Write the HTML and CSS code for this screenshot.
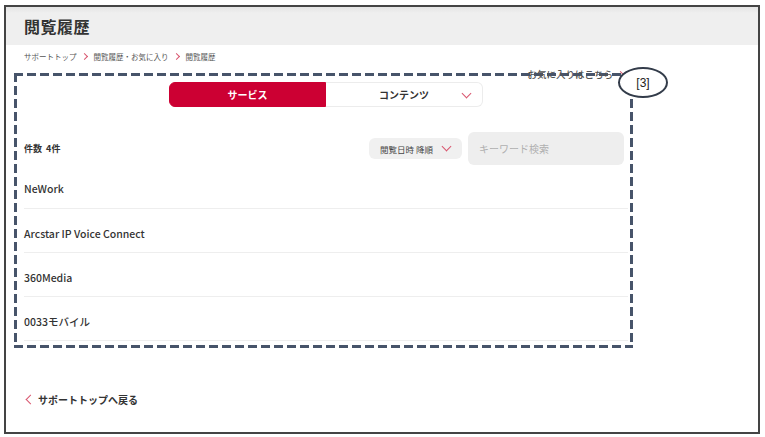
FILE: index.html
```html
<!DOCTYPE html>
<html lang="ja">
<head>
  <meta charset="UTF-8">
  <meta name="viewport" content="width=device-width, initial-scale=1.0">
  <title>閲覧履歴</title>
  <link rel="stylesheet" href="styles.css">
</head>
<body>
  <div class="frame">
    <header class="page-header">
      <h1>閲覧履歴</h1>
    </header>

    <nav class="breadcrumb">
      <a href="#">サポートトップ</a>
      <span class="sep"></span>
      <a href="#">閲覧履歴・お気に入り</a>
      <span class="sep"></span>
      <span>閲覧履歴</span>
    </nav>

    <section class="history">
      <a class="fav-link" href="#">お気に入りはこちら<span class="sep"></span></a>
      <span class="marker">[3]</span>

      <div class="tabs">
        <button class="tab active" type="button">サービス</button>
        <button class="tab" type="button">コンテンツ<span class="caret"></span></button>
      </div>

      <div class="toolbar">
        <div class="count">件数&nbsp; 4件</div>
        <div class="sort">閲覧日時 降順<span class="caret"></span></div>
        <input class="search" type="text" placeholder="キーワード検索">
      </div>

      <ul class="list">
        <li>NeWork</li>
        <li>Arcstar IP Voice Connect</li>
        <li>360Media</li>
        <li>0033モバイル</li>
      </ul>
    </section>

    <a class="back" href="#"><span class="back-arrow"></span>サポートトップへ戻る</a>
  </div>
</body>
</html>
```

FILE: styles.css
```css
body {
  margin: 0;
  padding: 5px 0 0 4px;
  font-family: "Noto Sans CJK JP", "Noto Sans", sans-serif;
  color: #333;
  background: #fff;
}

a {
  color: inherit;
  text-decoration: none;
}

.frame {
  box-sizing: border-box;
  width: 756px;
  height: 429px;
  border: 2px solid #444;
  background: #fff;
}

.page-header {
  height: 38px;
  background: linear-gradient(#e4e4e4, #efefef 6px);
  display: flex;
  align-items: center;
  padding-left: 18px;
}

.page-header h1 {
  margin: 0;
  font-size: 16px;
  font-weight: 700;
  color: #333;
  letter-spacing: 0.5px;
}

.breadcrumb {
  display: flex;
  align-items: center;
  gap: 4px;
  padding: 4px 0 0 18px;
  height: 14px;
  font-size: 7.5px;
  color: #555;
}

.sep {
  display: inline-block;
  width: 4px;
  height: 4px;
  border-top: 1px solid #d9566f;
  border-right: 1px solid #d9566f;
  transform: rotate(45deg);
  margin: 0 3px 0 1px;
}

/* dashed outline drawn with gradients so the dashes are long like the mockup */
.history {
  position: relative;
  box-sizing: border-box;
  width: 619px;
  height: 275px;
  margin: 10px 0 0 8px;
  padding: 9px 5px 0 10px;
  background:
    repeating-linear-gradient(90deg, #47546a 0 9px, transparent 9px 13px) top left / 100% 3px no-repeat,
    repeating-linear-gradient(90deg, #47546a 0 9px, transparent 9px 13px) bottom left / 100% 3px no-repeat,
    repeating-linear-gradient(180deg, #47546a 0 9px, transparent 9px 13px) top left / 3px 100% no-repeat,
    repeating-linear-gradient(180deg, #47546a 0 9px, transparent 9px 13px) top right / 3px 100% no-repeat;
}

.fav-link {
  position: absolute;
  top: -6px;
  right: 7px;
  font-size: 9.5px;
  font-weight: 500;
  color: #555;
  display: flex;
  align-items: center;
}

.fav-link .sep {
  margin-left: 5px;
}

.marker {
  position: absolute;
  top: -6px;
  right: -35px;
  box-sizing: border-box;
  width: 50px;
  height: 31px;
  border: 2px solid #333c4a;
  border-radius: 50%;
  background: #fff;
  display: flex;
  align-items: center;
  justify-content: center;
  font-family: "Liberation Sans", sans-serif;
  font-size: 12px;
  color: #222;
}

.tabs {
  display: flex;
  justify-content: center;
}

.tab {
  box-sizing: border-box;
  width: 157px;
  height: 25px;
  border: 1px solid #ececec;
  background: #fff;
  font-family: inherit;
  font-size: 10px;
  font-weight: 700;
  color: #333;
  position: relative;
  padding: 0;
}

.tab.active {
  background: #cc0033;
  border-color: #cc0033;
  color: #fff;
  border-radius: 6px 0 0 6px;
}

.tab:last-child {
  border-left: none;
  border-radius: 0 6px 6px 0;
}

.caret {
  display: inline-block;
  width: 6px;
  height: 6px;
  border-right: 1px solid #d9566f;
  border-bottom: 1px solid #d9566f;
  transform: rotate(45deg);
}

.tab .caret {
  position: absolute;
  right: 12px;
  top: 7px;
}

.toolbar {
  display: flex;
  align-items: center;
  margin-top: 25px;
  height: 33px;
}

.count {
  flex: 1;
  font-size: 9px;
  font-weight: 700;
  color: #333;
}

.sort {
  box-sizing: border-box;
  height: 21px;
  width: 93px;
  border-radius: 6px;
  background: #f0f0f0;
  font-size: 8.5px;
  color: #444;
  display: flex;
  align-items: center;
  padding-left: 11px;
  gap: 10px;
}

.sort .caret {
  margin-top: -4px;
}

.search {
  box-sizing: border-box;
  width: 156px;
  height: 33px;
  margin: 0 4px 0 6px;
  border: none;
  border-radius: 6px;
  background: #eeeeee;
  padding: 0 11px;
  font-family: inherit;
  font-size: 10px;
}

.search::placeholder {
  color: #b0b0b0;
}

.list {
  list-style: none;
  margin: 0;
  padding: 0;
}

.list li {
  box-sizing: border-box;
  height: 44px;
  padding-top: 17px;
  line-height: 16px;
  border-bottom: 1px solid #eeeeee;
  font-size: 10.5px;
  font-weight: 500;
  color: #333;
}

.list li:first-child {
  padding-top: 16px;
}

.back {
  display: flex;
  align-items: center;
  margin: 44px 0 0 18px;
  font-size: 10px;
  font-weight: 700;
  color: #333;
}

.back-arrow {
  display: inline-block;
  width: 6px;
  height: 6px;
  border-left: 1px solid #d9566f;
  border-bottom: 1px solid #d9566f;
  transform: rotate(45deg);
  margin: 0 4px 0 3px;
}
```
